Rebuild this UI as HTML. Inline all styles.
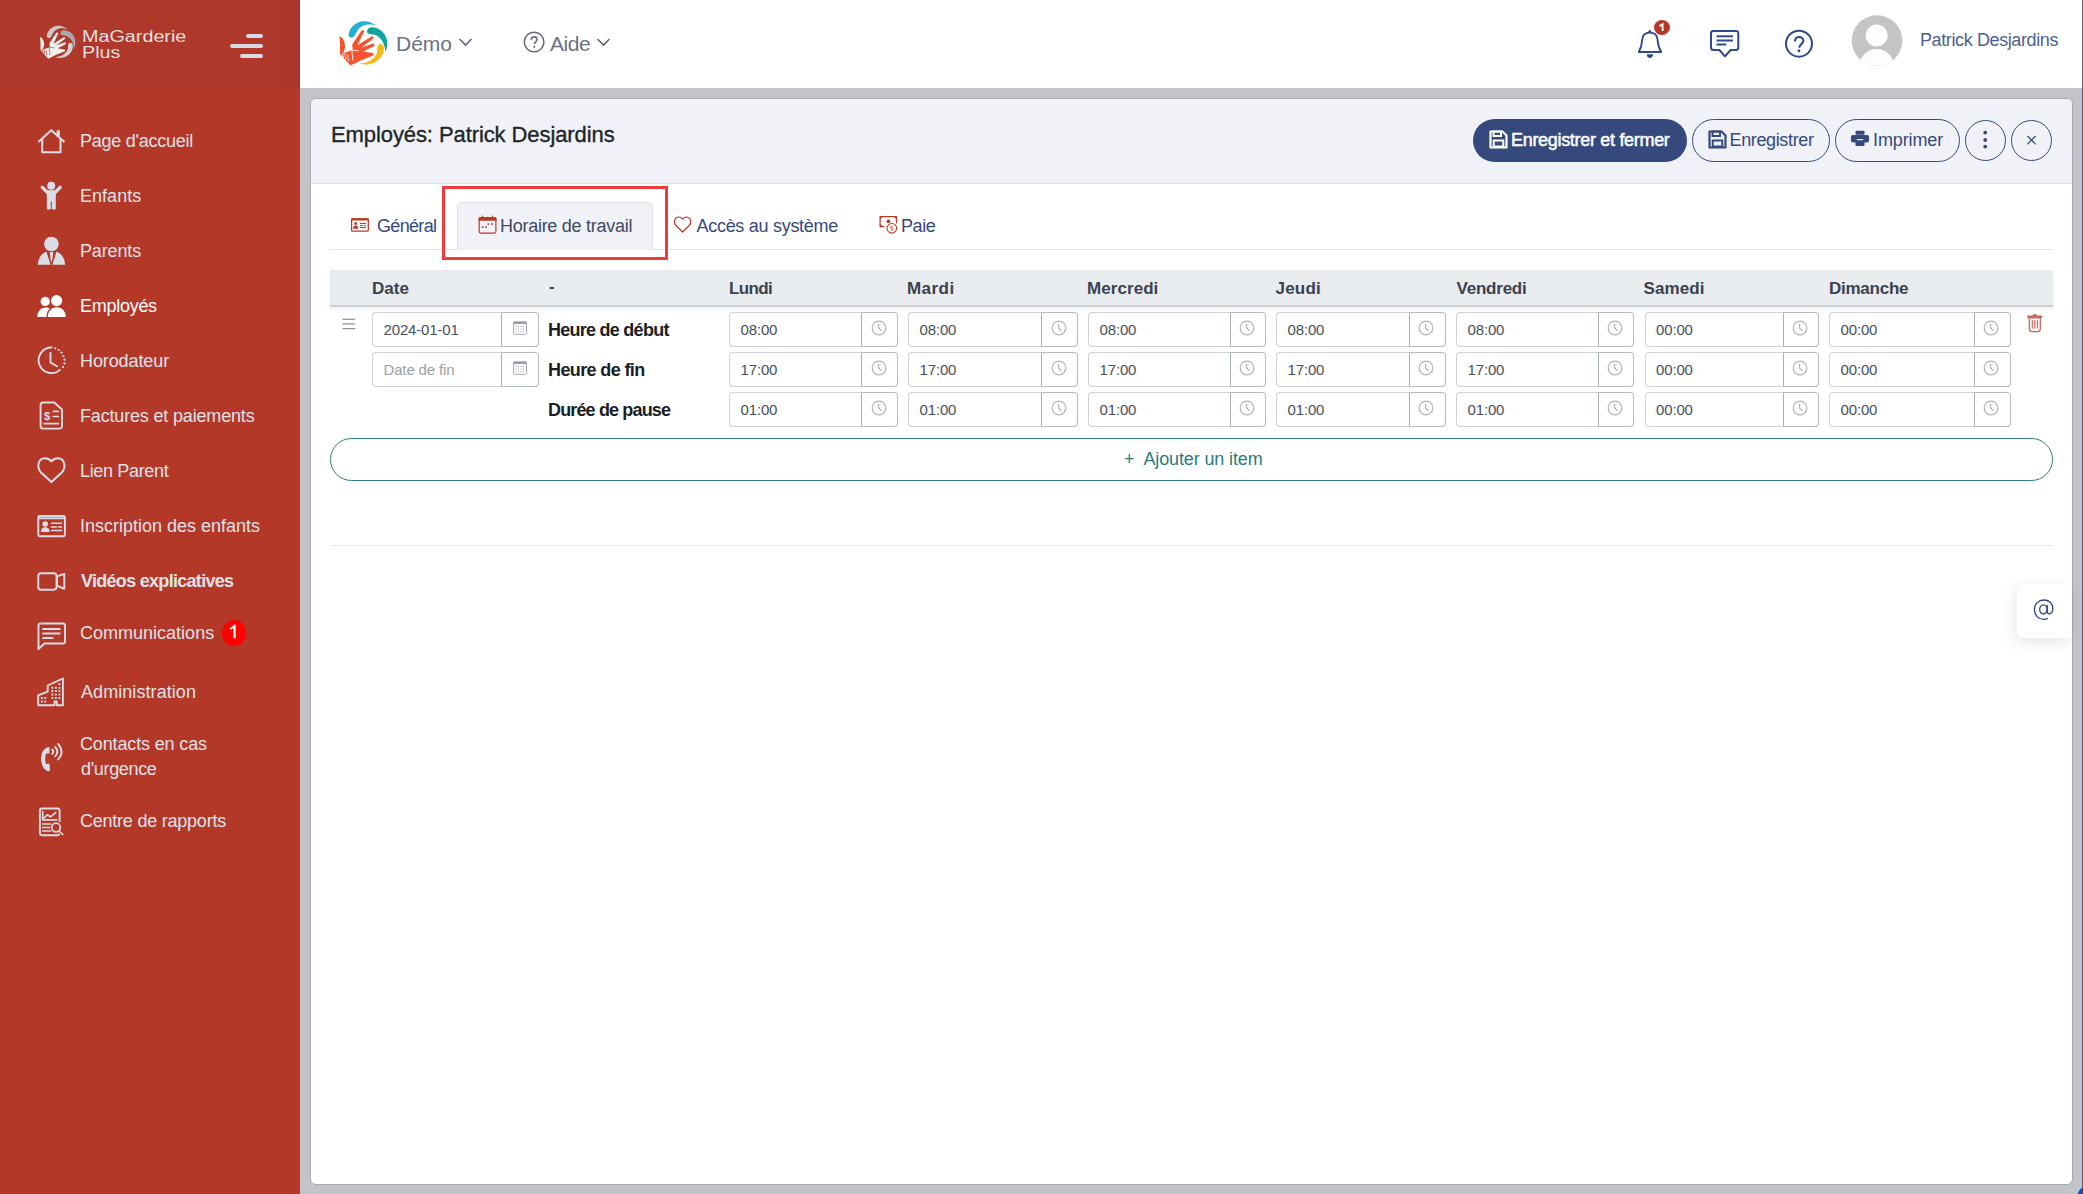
<!DOCTYPE html>
<html><head><meta charset="utf-8"><title>MaGarderie Plus</title>
<style>
html,body{margin:0;padding:0;}
body{width:2083px;height:1194px;overflow:hidden;position:relative;background:#c3c4c8;font-family:"Liberation Sans",sans-serif;}
.t{position:absolute;white-space:nowrap;}
.ic{position:absolute;overflow:visible;}
.box{position:absolute;box-sizing:border-box;}
</style></head><body>
<div class="box" style="left:0;top:0;width:300px;height:1194px;background:#b43828;"></div>
<div class="box" style="left:0;top:0;width:300px;height:88px;background:linear-gradient(to right,#b0382a 0,#b0382a 255px,#a9362a 300px);"></div>
<svg class="ic" style="left:36px;top:22px;" width="44.4" height="40.0" viewBox="0 0 60 54"><path d="M14.6,18.5 C15.5,11 23,5 30,5.2 C35,5.3 39.5,7 42.2,9.8 C38,8.2 32,7.8 27.5,10.5 C24,12.6 22.5,16 21,19 C19.7,21.6 17.5,22 16,21.3 C14.8,20.6 14.4,19.5 14.6,18.5 Z" fill="#c9c9cb"/><path d="M33,15.5 C33,12.5 35.5,11 38.5,11.2 C47,11.8 53.5,19 53.2,28 C53.1,31 52.6,33.5 51.5,36 C51,29 48,22 42,19.2 C40,18.3 37.5,18.5 35.5,18 C34,17.6 33,16.8 33,15.5 Z" fill="#a8a8ab"/><path d="M43.3,33 C43,30 44.5,28.2 46.5,28.1 C48.5,28 50,30 49.9,33 C49.5,41 42,48.5 32,48.6 C29.5,48.6 27.3,48.1 25.5,47.4 C31,47.5 37,45 40.5,41 C42.7,38.5 43.5,35.5 43.3,33 Z" fill="#d2d2d4"/><path d="M5.2,20.5 C8.3,20.8 10.6,24.5 11,29.5 C11.2,32.5 10,35.5 8.8,37.6 L18.6,34 L18.3,28.3 L27.6,14.6 Q29.4,13 30.1,15.6 L23.4,29.3 L37.6,20.6 Q40,19.8 39.5,22.6 L27.1,31.8 L39,27.5 Q41.2,27.6 40.2,29.9 L29.2,35.6 L38.3,37 Q40.6,37.6 39.2,39.4 L27.2,44.3 L16.5,49.5 L6.3,38.2 C5.6,33.5 6.8,26 5.2,20.5 Z" fill="#f1f1f1"/><path d="M8.6,37.6 L9.4,41.6 M11,37.8 L11.9,43 M13.6,38.3 L14.5,44.5 M17.9,34.8 L18.9,44.2 M18.6,34.1 L24.4,34.9" fill="none" stroke="#b43828" stroke-width="0.9" stroke-linecap="round"/></svg>
<div class="t" id="tc28c3672" style="left:81.5px;top:28.76px;font-size:16px;line-height:16px;color:#e6dfdf;font-weight:normal;letter-spacing:0.000px;transform:scaleX(1.235);transform-origin:0 0;">MaGarderie</div>
<div class="t" id="td395f989" style="left:81.5px;top:45.26px;font-size:16px;line-height:16px;color:#e6dfdf;font-weight:normal;letter-spacing:0.000px;transform:scaleX(1.235);transform-origin:0 0;">Plus</div>
<svg class="ic" style="left:226px;top:30px;" width="40" height="32" viewBox="0 0 40 32">
<g stroke="#d6dbe2" stroke-width="4" stroke-linecap="round">
<line x1="22" y1="6" x2="35" y2="6"/><line x1="6" y1="16" x2="35" y2="16"/><line x1="16" y1="26" x2="35" y2="26"/></g></svg>
<svg class="ic" style="left:34px;top:121px;" width="36" height="36" viewBox="0 0 36 36"><g fill="none" stroke="#d9dde5" stroke-width="2" stroke-linejoin="round">
<path d="M4.3,21 L17.3,9.2 L30.5,21"/><path d="M8.2,18 V31.3 H26.5 V18"/></g>
<rect x="22.6" y="9.3" width="3.2" height="6.5" fill="#d9dde5"/></svg>
<div class="t" id="t37de8b58" style="left:80.0px;top:131.76px;font-size:18px;line-height:18px;color:#dfe1e8;font-weight:normal;letter-spacing:-0.253px;">Page d'accueil</div>
<svg class="ic" style="left:34px;top:176px;" width="36" height="36" viewBox="0 0 36 36"><circle cx="17.2" cy="9.7" r="4" fill="#d9dde5"/>
<g stroke="#d9dde5" stroke-width="3.3" stroke-linecap="round"><line x1="8.3" y1="11.3" x2="14" y2="17"/><line x1="26.2" y1="11.3" x2="20.5" y2="17"/></g>
<path d="M12.8,15.5 Q12.8,14.3 14,14.3 H20.5 Q21.8,14.3 21.8,15.5 V32.5 Q21.8,33.5 20.8,33.5 H18.6 Q17.8,33.5 17.8,32.5 V25.5 H16.8 V32.5 Q16.8,33.5 15.9,33.5 H13.8 Q12.8,33.5 12.8,32.5 Z" fill="#d9dde5"/></svg>
<div class="t" id="t1cf4caa8" style="left:80.0px;top:186.76px;font-size:18px;line-height:18px;color:#dfe1e8;font-weight:normal;letter-spacing:0.033px;">Enfants</div>
<svg class="ic" style="left:34px;top:231px;" width="36" height="36" viewBox="0 0 36 36"><circle cx="17.4" cy="13" r="7.3" fill="#d9dde5"/>
<path d="M3.8,33.8 C3.9,27 8,22 12.5,20.8 L16.6,33.8 Z" fill="#d9dde5"/>
<path d="M22.4,20.8 C27,22 31,27 31.1,33.8 L18.4,33.8 Z" fill="#d9dde5"/>
<path d="M15.8,20.9 H19.2 L18.3,29 L17.5,31.5 L16.6,29 Z" fill="#d9dde5"/></svg>
<div class="t" id="t525abe4e" style="left:80.0px;top:241.76px;font-size:18px;line-height:18px;color:#dfe1e8;font-weight:normal;letter-spacing:-0.134px;">Parents</div>
<svg class="ic" style="left:34px;top:286px;" width="36" height="36" viewBox="0 0 36 36"><circle cx="11.2" cy="15.4" r="4.6" fill="#fff"/><circle cx="22.6" cy="14.6" r="5.6" fill="#fff"/>
<path d="M3.3,31 C3.3,25.5 7,21.5 11.5,21.5 C13.3,21.5 15,22 16,22.6 C13.6,24.5 12.6,27.5 12.5,31 Z" fill="#fff"/>
<path d="M13.8,31 C13.8,25.3 17.5,21.3 22.7,21.3 C27.8,21.3 31.8,25.3 31.8,31 Z" fill="#fff"/></svg>
<div class="t" id="tfb248176" style="left:80.0px;top:296.76px;font-size:18px;line-height:18px;color:#ffffff;font-weight:normal;letter-spacing:-0.273px;">Employés</div>
<svg class="ic" style="left:34px;top:341px;" width="36" height="36" viewBox="0 0 36 36"><path d="M18.3,6.5 A12.8,12.8 0 1 0 26.5,28.3" fill="none" stroke="#d9dde5" stroke-width="1.9"/>
<g fill="#d9dde5"><circle cx="21.3" cy="7.3" r="1.1"/><circle cx="24.7" cy="9" r="1.1"/><circle cx="27.5" cy="11.6" r="1.1"/><circle cx="29.4" cy="15" r="1.1"/><circle cx="30.5" cy="18.7" r="1.1"/><circle cx="30.5" cy="22.4" r="1.1"/><circle cx="29" cy="26" r="1.1"/></g>
<path d="M16.5,12 V21.5 L23,25.3" fill="none" stroke="#d9dde5" stroke-width="1.9" stroke-linecap="round"/></svg>
<div class="t" id="td3f3b501" style="left:80.0px;top:351.76px;font-size:18px;line-height:18px;color:#dfe1e8;font-weight:normal;letter-spacing:-0.099px;">Horodateur</div>
<svg class="ic" style="left:34px;top:396px;" width="36" height="36" viewBox="0 0 36 36"><path d="M9,6.5 H20.3 L28,13.5 V30 Q28,32.6 25.4,32.6 H9 Q6.6,32.6 6.6,30 V9 Q6.6,6.5 9,6.5 Z" fill="none" stroke="#d9dde5" stroke-width="1.9" stroke-linejoin="round"/>
<text x="10" y="23.8" font-family="Liberation Sans" font-weight="bold" font-size="11" fill="#d9dde5">$</text>
<g stroke="#d9dde5" stroke-width="1.7" stroke-linecap="round"><line x1="19.3" y1="15.4" x2="24.4" y2="15.4"/><line x1="19.3" y1="20.5" x2="24.4" y2="20.5"/><line x1="10" y1="27.6" x2="24.4" y2="27.6"/></g></svg>
<div class="t" id="t5be32d3b" style="left:80.0px;top:406.76px;font-size:18px;line-height:18px;color:#dfe1e8;font-weight:normal;letter-spacing:-0.170px;">Factures et paiements</div>
<svg class="ic" style="left:34px;top:451px;" width="36" height="36" viewBox="0 0 36 36"><path d="M17.4,31 L7,21.5 C2.5,16.5 3.8,7.3 11,7.3 C14,7.3 16,8.8 17.4,10.3 C18.8,8.8 20.8,7.3 23.8,7.3 C31,7.3 32.3,16.5 27.8,21.5 Z" fill="none" stroke="#d9dde5" stroke-width="2" stroke-linejoin="round"/></svg>
<div class="t" id="t5ed269b5" style="left:80.0px;top:461.76px;font-size:18px;line-height:18px;color:#dfe1e8;font-weight:normal;letter-spacing:-0.340px;">Lien Parent</div>
<svg class="ic" style="left:34px;top:506px;" width="36" height="36" viewBox="0 0 36 36"><rect x="4.3" y="10" width="26.6" height="20.3" rx="1.5" fill="none" stroke="#d9dde5" stroke-width="1.9"/>
<line x1="4.3" y1="12.3" x2="30.9" y2="12.3" stroke="#d9dde5" stroke-width="1.9"/>
<circle cx="11.2" cy="18" r="2.8" fill="#d9dde5"/><path d="M6.9,26 C6.9,22.6 9,21.2 11.2,21.2 C13.4,21.2 15.6,22.6 15.6,26 Z" fill="#d9dde5"/>
<g stroke="#d9dde5" stroke-width="1.6" stroke-linecap="round"><line x1="17.6" y1="17.3" x2="27.5" y2="17.3"/><line x1="17.6" y1="21" x2="22.3" y2="21"/><line x1="24.5" y1="21" x2="27.5" y2="21"/><line x1="17.6" y1="24.5" x2="27.5" y2="24.5"/></g></svg>
<div class="t" id="t97135bcc" style="left:80.0px;top:516.76px;font-size:18px;line-height:18px;color:#dfe1e8;font-weight:normal;letter-spacing:-0.008px;">Inscription des enfants</div>
<svg class="ic" style="left:34px;top:561px;" width="36" height="36" viewBox="0 0 36 36"><rect x="4.3" y="12.2" width="18.2" height="16.5" rx="2.6" fill="none" stroke="#d9dde5" stroke-width="1.9"/>
<path d="M23,15.3 L30.3,12.8 V27.8 L23,24.7 Z" fill="none" stroke="#d9dde5" stroke-width="1.9" stroke-linejoin="round"/></svg>
<div class="t" id="t484a46a2" style="left:81.0px;top:571.76px;font-size:18px;line-height:18px;color:#dfe1e8;font-weight:bold;letter-spacing:-0.705px;">Vidéos explicatives</div>
<svg class="ic" style="left:34px;top:614px;" width="36" height="36" viewBox="0 0 36 36"><path d="M6.3,9.5 H29 Q31,9.5 31,11.5 V27.5 Q31,29.5 29,29.5 H10.5 L4.5,35 V11.5 Q4.5,9.5 6.3,9.5 Z" fill="none" stroke="#d9dde5" stroke-width="1.9" stroke-linejoin="round"/>
<g stroke="#d9dde5" stroke-width="1.8" stroke-linecap="round"><line x1="9" y1="15" x2="25.8" y2="15"/><line x1="9" y1="19.5" x2="25.8" y2="19.5"/><line x1="9" y1="24" x2="18.8" y2="24"/></g></svg>
<div class="t" id="t299c491f" style="left:80.0px;top:623.76px;font-size:18px;line-height:18px;color:#dfe1e8;font-weight:normal;letter-spacing:0.008px;">Communications</div>
<svg class="ic" style="left:34px;top:673px;" width="36" height="36" viewBox="0 0 36 36"><path d="M4.2,32.3 V22.3 L13.7,18.6 V12.5 L28.9,5.5 V32.3 H22.8 V28.5 H20.5 V32.3 Z" fill="none" stroke="#d9dde5" stroke-width="1.9" stroke-linejoin="round"/>
<g fill="#d9dde5"><rect x="24.400000000000002" y="10.1" width="1.9" height="1.9"/><rect x="17.400000000000002" y="13.799999999999999" width="1.9" height="1.9"/><rect x="20.900000000000002" y="13.799999999999999" width="1.9" height="1.9"/><rect x="24.400000000000002" y="13.799999999999999" width="1.9" height="1.9"/><rect x="17.400000000000002" y="17.1" width="1.9" height="1.9"/><rect x="20.900000000000002" y="17.1" width="1.9" height="1.9"/><rect x="24.400000000000002" y="17.1" width="1.9" height="1.9"/><rect x="17.400000000000002" y="20.6" width="1.9" height="1.9"/><rect x="20.900000000000002" y="20.6" width="1.9" height="1.9"/><rect x="24.400000000000002" y="20.6" width="1.9" height="1.9"/><rect x="17.400000000000002" y="24.1" width="1.9" height="1.9"/><rect x="20.900000000000002" y="24.1" width="1.9" height="1.9"/><rect x="24.400000000000002" y="24.1" width="1.9" height="1.9"/><rect x="6.8999999999999995" y="24.1" width="1.9" height="1.9"/><rect x="10.299999999999999" y="24.1" width="1.9" height="1.9"/><rect x="6.8999999999999995" y="27.6" width="1.9" height="1.9"/><rect x="10.299999999999999" y="27.6" width="1.9" height="1.9"/></g></svg>
<div class="t" id="t37e4b3b3" style="left:81.0px;top:682.76px;font-size:18px;line-height:18px;color:#dfe1e8;font-weight:normal;letter-spacing:0.068px;">Administration</div>
<svg class="ic" style="left:34px;top:738px;" width="36" height="36" viewBox="0 0 36 36"><path d="M15.5,9 C12,9 8.5,12.5 7.5,17 C6.5,22 7.5,27 10,30.5 C11.5,32.5 14,33.5 16,33 L15.5,25.5 L12,26 C11,23 11,19 12,15.5 L15.5,15.5 Z" fill="#d9dde5"/>
<g fill="none" stroke="#d9dde5" stroke-width="1.9" stroke-linecap="round"><path d="M18.3,11.5 Q20.3,13.5 18.3,16"/><path d="M21.2,9 Q25.5,13.7 21.2,18.3"/><path d="M24.2,6 Q31,13.7 24.2,21.5"/></g></svg>
<div class="t" id="t5dea8d7a" style="left:80.0px;top:734.76px;font-size:18px;line-height:18px;color:#dfe1e8;font-weight:normal;letter-spacing:-0.144px;">Contacts en cas</div>
<svg class="ic" style="left:34px;top:803px;" width="36" height="36" viewBox="0 0 36 36"><path d="M8,5.5 H23.5 Q25.6,5.5 25.6,7.6 V19" fill="none" stroke="#d9dde5" stroke-width="1.9"/>
<path d="M25.6,30.5 Q25.2,32.2 23.5,32.2 H8 Q5.9,32.2 5.9,30 V7.6 Q5.9,5.5 8,5.5" fill="none" stroke="#d9dde5" stroke-width="1.9"/>
<g fill="none" stroke="#d9dde5" stroke-width="1.7" stroke-linecap="round" stroke-linejoin="round"><path d="M8.7,8.7 V16.8 H22.5"/><path d="M10,15 L13.2,11.8 L16.5,13.8 L21.7,9.6"/>
<line x1="8.7" y1="21" x2="16.5" y2="21"/><line x1="8.7" y1="24.5" x2="15.5" y2="24.5"/><line x1="8.7" y1="28" x2="16.5" y2="28"/>
<circle cx="22" cy="24.5" r="4.3"/><line x1="25.2" y1="28" x2="28.8" y2="31.5"/></g></svg>
<div class="t" id="t1e6ba577" style="left:80.0px;top:811.76px;font-size:18px;line-height:18px;color:#dfe1e8;font-weight:normal;letter-spacing:-0.230px;">Centre de rapports</div>
<div class="t" id="tf7f37f4f" style="left:81.0px;top:759.76px;font-size:18px;line-height:18px;color:#dfe1e8;font-weight:normal;letter-spacing:-0.327px;">d'urgence</div>
<div class="box" style="left:222px;top:620px;width:24px;height:26px;border-radius:50%;background:#ff0000;"></div>
<svg class="ic" style="left:222px;top:620px;" width="24" height="26" viewBox="0 0 24 26"><path d="M8.3,9 L12.6,6 V18.2" fill="none" stroke="#fff" stroke-width="2.1" stroke-linejoin="miter"/></svg>
<div class="box" style="left:300px;top:0;width:1782px;height:88px;background:#fff;"></div>
<div class="box" style="left:2082px;top:0;width:1px;height:1194px;background:#5d5a84;"></div>
<div class="box" style="left:2077px;top:1185px;width:26px;height:26px;border-radius:50%;background:#1f4aa6;"></div>
<svg class="ic" style="left:334px;top:16px;" width="60.0" height="54.0" viewBox="0 0 60 54"><path d="M14.6,18.5 C15.5,11 23,5 30,5.2 C35,5.3 39.5,7 42.2,9.8 C38,8.2 32,7.8 27.5,10.5 C24,12.6 22.5,16 21,19 C19.7,21.6 17.5,22 16,21.3 C14.8,20.6 14.4,19.5 14.6,18.5 Z" fill="#22b0d8"/><path d="M33,15.5 C33,12.5 35.5,11 38.5,11.2 C47,11.8 53.5,19 53.2,28 C53.1,31 52.6,33.5 51.5,36 C51,29 48,22 42,19.2 C40,18.3 37.5,18.5 35.5,18 C34,17.6 33,16.8 33,15.5 Z" fill="#11a59d"/><path d="M43.3,33 C43,30 44.5,28.2 46.5,28.1 C48.5,28 50,30 49.9,33 C49.5,41 42,48.5 32,48.6 C29.5,48.6 27.3,48.1 25.5,47.4 C31,47.5 37,45 40.5,41 C42.7,38.5 43.5,35.5 43.3,33 Z" fill="#f5bb14"/><path d="M5.2,20.5 C8.3,20.8 10.6,24.5 11,29.5 C11.2,32.5 10,35.5 8.8,37.6 L18.6,34 L18.3,28.3 L27.6,14.6 Q29.4,13 30.1,15.6 L23.4,29.3 L37.6,20.6 Q40,19.8 39.5,22.6 L27.1,31.8 L39,27.5 Q41.2,27.6 40.2,29.9 L29.2,35.6 L38.3,37 Q40.6,37.6 39.2,39.4 L27.2,44.3 L16.5,49.5 L6.3,38.2 C5.6,33.5 6.8,26 5.2,20.5 Z" fill="#f7532f"/><path d="M8.6,37.6 L9.4,41.6 M11,37.8 L11.9,43 M13.6,38.3 L14.5,44.5 M17.9,34.8 L18.9,44.2 M18.6,34.1 L24.4,34.9" fill="none" stroke="#ffffff" stroke-width="0.9" stroke-linecap="round"/></svg>
<div class="t" id="tea6dfe55" style="left:396.0px;top:33.22px;font-size:21px;line-height:21px;color:#6c7183;font-weight:normal;letter-spacing:-0.034px;">Démo</div>
<svg class="ic" style="left:458px;top:36px;" width="16" height="12" viewBox="0 0 16 12"><path d="M1.5,3 L7.5,9 L13.5,3" fill="none" stroke="#5d6376" stroke-width="1.6"/></svg>
<svg class="ic" style="left:522px;top:30px;" width="24" height="24" viewBox="0 0 24 24"><circle cx="12.1" cy="12" r="9.8" fill="none" stroke="#666b7d" stroke-width="1.5"/><path d="M9.3,10 C9.3,7.9 10.6,6.9 12.2,6.9 C13.9,6.9 15,8 15,9.5 C15,11.8 12.4,12 12.4,14.3" fill="none" stroke="#666b7d" stroke-width="1.6"/><circle cx="12.3" cy="16.8" r="1.1" fill="#666b7d"/></svg>
<div class="t" id="t45380d61" style="left:550.0px;top:33.22px;font-size:21px;line-height:21px;color:#6c7183;font-weight:normal;letter-spacing:-0.466px;">Aide</div>
<svg class="ic" style="left:596px;top:36px;" width="16" height="12" viewBox="0 0 16 12"><path d="M1.5,3 L7.5,9 L13.5,3" fill="none" stroke="#5d6376" stroke-width="1.6"/></svg>
<svg class="ic" style="left:1632px;top:16px;" width="44" height="46" viewBox="0 0 44 46"><path d="M6.8,36 H29.2 C27.3,33 26,29 25.6,24 C25.4,19.5 22.5,16.6 17.9,16.6 C13.3,16.6 10.4,19.5 10.2,24 C9.8,29 8.5,33 6.8,36 Z" fill="none" stroke="#2f4a8a" stroke-width="1.9" stroke-linejoin="round"/>
<circle cx="17.9" cy="15.6" r="1.5" fill="#2f4a8a"/><path d="M14.7,38.3 H21.1 Q20.8,41.9 17.9,41.9 Q15,41.9 14.7,38.3 Z" fill="#2f4a8a"/></svg>
<div class="box" style="left:1654px;top:20px;width:16px;height:15px;border-radius:50%;background:#b8372a;"></div>
<svg class="ic" style="left:1654px;top:20px;" width="16" height="15" viewBox="0 0 16 15"><path d="M5.4,6.1 L8.6,4.3 V10.9" fill="none" stroke="#fff" stroke-width="1.8"/></svg>
<svg class="ic" style="left:1708px;top:28px;" width="34" height="32" viewBox="0 0 34 32"><path d="M5.3,2.9 H28 Q30.3,2.9 30.3,5.2 V19.6 Q30.3,22 28,22 H22.6 L17,28.3 L11.4,22 H5.3 Q3,22 3,19.6 V5.2 Q3,2.9 5.3,2.9Z" fill="none" stroke="#2f4a8a" stroke-width="2" stroke-linejoin="round"/>
<g stroke="#2f4a8a" stroke-width="2"><line x1="8.5" y1="8.3" x2="25" y2="8.3"/><line x1="8.5" y1="12.5" x2="25" y2="12.5"/><line x1="8.5" y1="16.5" x2="18.3" y2="16.5"/></g></svg>
<svg class="ic" style="left:1784px;top:29px;" width="30" height="30" viewBox="0 0 30 30"><circle cx="15" cy="14.7" r="13" fill="none" stroke="#2f4a8a" stroke-width="2"/>
<path d="M11,12.6 C11,9.6 12.8,8 15.1,8 C17.6,8 19.3,9.7 19.3,11.8 C19.3,15 15.2,15.3 15.2,18.7" fill="none" stroke="#2f4a8a" stroke-width="2.1"/><circle cx="14.9" cy="21.8" r="1.5" fill="#2f4a8a"/></svg>
<svg class="ic" style="left:1851px;top:15px;" width="52" height="52" viewBox="0 0 52 52"><defs><clipPath id="av"><circle cx="26" cy="25.5" r="25.3"/></clipPath></defs>
<circle cx="26" cy="25.5" r="25.3" fill="#c4c4c4"/>
<g clip-path="url(#av)" fill="#fdfdfd"><circle cx="25.7" cy="20.5" r="11"/><ellipse cx="25.7" cy="52" rx="17.5" ry="18"/></g></svg>
<div class="t" id="tb3319f88" style="left:1920.0px;top:30.56px;font-size:18px;line-height:18px;color:#4e5f93;font-weight:normal;letter-spacing:-0.389px;">Patrick Desjardins</div>
<div class="box" style="left:310px;top:98px;width:1763px;height:1087px;background:#fff;border:1px solid #a9aaaf;border-radius:6px;overflow:hidden;"><div style="position:absolute;left:0;top:0;width:1761px;height:84px;background:#f0f2f7;border-bottom:1px solid #dde1e6;"></div></div>
<div class="t" id="t535848aa" style="left:331.0px;top:124.38px;font-size:22px;line-height:22px;color:#212529;font-weight:normal;letter-spacing:-0.090px;-webkit-text-stroke:0.35px #212529;">Employés: Patrick Desjardins</div>
<div class="box" style="left:1473px;top:119px;width:214px;height:43px;border-radius:22px;background:#36497d;"></div>
<svg class="ic" style="left:1489px;top:130px;" width="19" height="19" viewBox="0 0 19 19"><path d="M1.5,1.5 H13.5 L17.5,5.5 V17.5 H1.5 Z" fill="none" stroke="#fff" stroke-width="2.2" stroke-linejoin="round"/>
<rect x="4.5" y="1.5" width="7.5" height="4.5" fill="none" stroke="#fff" stroke-width="2"/><rect x="4.7" y="10.5" width="9.6" height="6" fill="none" stroke="#fff" stroke-width="2"/></svg>
<div class="t" id="tab7a3b78" style="left:1511.0px;top:130.76px;font-size:18px;line-height:18px;color:#fff;font-weight:normal;letter-spacing:-0.310px;-webkit-text-stroke:0.5px #fff;">Enregistrer et fermer</div>
<div class="box" style="left:1692px;top:119px;width:138px;height:43px;border-radius:22px;border:1.5px solid #36497d;"></div>
<svg class="ic" style="left:1708px;top:130px;" width="19" height="19" viewBox="0 0 19 19"><path d="M1.5,1.5 H13.5 L17.5,5.5 V17.5 H1.5 Z" fill="none" stroke="#36497d" stroke-width="2.2" stroke-linejoin="round"/>
<rect x="4.5" y="1.5" width="7.5" height="4.5" fill="none" stroke="#36497d" stroke-width="2"/><rect x="4.7" y="10.5" width="9.6" height="6" fill="none" stroke="#36497d" stroke-width="2"/></svg>
<div class="t" id="td6e0880f" style="left:1729.5px;top:130.76px;font-size:18px;line-height:18px;color:#36497d;font-weight:normal;letter-spacing:-0.360px;">Enregistrer</div>
<div class="box" style="left:1835px;top:119px;width:125px;height:43px;border-radius:22px;border:1.5px solid #36497d;"></div>
<svg class="ic" style="left:1850px;top:130px;" width="20" height="17" viewBox="0 0 20 17"><rect x="5.5" y="0.8" width="9" height="4" rx="1" fill="#36497d"/><rect x="1" y="5" width="18" height="7.5" rx="2" fill="#36497d"/><rect x="5.5" y="9.5" width="9" height="6.5" rx="1" fill="#36497d"/><rect x="6.8" y="9" width="6.4" height="1.2" fill="#f0f2f7"/></svg>
<div class="t" id="t110228c9" style="left:1873.0px;top:130.76px;font-size:18px;line-height:18px;color:#36497d;font-weight:normal;letter-spacing:-0.107px;">Imprimer</div>
<div class="box" style="left:1965px;top:120px;width:41px;height:41px;border-radius:50%;border:1.5px solid #36497d;"></div>
<svg class="ic" style="left:1981px;top:128px;" width="8" height="24" viewBox="0 0 8 24"><circle cx="4.2" cy="4.6" r="1.9" fill="#36497d"/><circle cx="4.2" cy="12" r="1.9" fill="#36497d"/><circle cx="4.2" cy="18.6" r="1.9" fill="#36497d"/></svg>
<div class="box" style="left:2011px;top:120px;width:41px;height:41px;border-radius:50%;border:1.5px solid #36497d;"></div>
<svg class="ic" style="left:2025px;top:134px;" width="14" height="14" viewBox="0 0 14 14"><g stroke="#36497d" stroke-width="1.3"><line x1="2.3" y1="2" x2="10.7" y2="10.4"/><line x1="10.7" y1="2" x2="2.3" y2="10.4"/></g></svg>
<div class="box" style="left:330px;top:249px;width:1723px;height:1px;background:#dee2e6;"></div>
<div class="box" style="left:457px;top:202px;width:196px;height:48px;background:#f0f2f7;border:1px solid #dee2e6;border-bottom:none;border-radius:5px 5px 0 0;"></div>
<svg class="ic" style="left:345px;top:210px;" width="30" height="30" viewBox="0 0 30 30"><rect x="6.6" y="8.8" width="16.7" height="12.4" rx="1.2" fill="none" stroke="#b83b25" stroke-width="1.3"/>
<rect x="6.2" y="8.3" width="17.5" height="2.2" fill="#b83b25"/>
<circle cx="10.7" cy="13.4" r="1.5" fill="#b83b25"/><path d="M8.1,18.8 C8.1,16.3 9.4,15.5 10.7,15.5 C12,15.5 13.3,16.3 13.3,18.8 Z" fill="#b83b25"/>
<g stroke="#b83b25" stroke-width="1.1"><line x1="15" y1="13.4" x2="21" y2="13.4"/><line x1="15" y1="15.5" x2="17.8" y2="15.5"/><line x1="19.1" y1="15.5" x2="21" y2="15.5"/><line x1="15" y1="17.5" x2="21" y2="17.5"/></g></svg>
<div class="t" id="t6f29dc0c" style="left:377.0px;top:216.56px;font-size:18px;line-height:18px;color:#36497d;font-weight:normal;letter-spacing:-0.667px;">Général</div>
<svg class="ic" style="left:472px;top:210px;" width="30" height="30" viewBox="0 0 30 30"><rect x="7.2" y="7.5" width="16.7" height="15.6" rx="1.5" fill="none" stroke="#b83b25" stroke-width="1.2"/>
<path d="M6.6,10.8 V8.8 Q6.6,6.9 8.6,6.9 H22.5 Q24.5,6.9 24.5,8.8 V10.8 Z" fill="#b83b25"/><rect x="9.9" y="5.6" width="1.1" height="2" fill="#b83b25"/><rect x="20" y="5.6" width="1.1" height="2" fill="#b83b25"/>
<g fill="#b83b25"><rect x="15.6" y="13.2" width="1.6" height="1.6"/><rect x="19.2" y="13.2" width="1.6" height="1.6"/><rect x="10" y="16.4" width="1.6" height="1.6"/><rect x="13.3" y="16.4" width="1.6" height="1.6"/></g></svg>
<div class="t" id="t8ef695cb" style="left:500.0px;top:216.56px;font-size:18px;line-height:18px;color:#3f4a62;font-weight:normal;letter-spacing:-0.274px;">Horaire de travail</div>
<svg class="ic" style="left:673px;top:215px;" width="20" height="19" viewBox="0 0 20 19"><path d="M9.6,17 L3,10.5 C0.5,8 1,2.5 5.3,2 C7.3,1.8 8.6,3 9.6,4.2 C10.6,3 11.9,1.8 13.9,2 C18.2,2.5 18.7,8 16.2,10.5 Z" fill="none" stroke="#b83b25" stroke-width="1.2" stroke-linejoin="round"/></svg>
<div class="t" id="tebeabed6" style="left:696.5px;top:216.56px;font-size:18px;line-height:18px;color:#36497d;font-weight:normal;letter-spacing:-0.286px;">Accès au système</div>
<svg class="ic" style="left:874px;top:210px;" width="30" height="30" viewBox="0 0 30 30"><path d="M10.5,16.6 H6.1 V6.6 H22.5 V13.3" fill="none" stroke="#b83b25" stroke-width="1.2"/>
<path d="M6.1,6.6 H9.3 L6.1,9.3 Z M22.5,6.6 H19.5 L22.5,9.3 Z M6.1,16.6 V14 L9,16.6 Z" fill="#b83b25"/>
<circle cx="14.4" cy="11.3" r="1.9" fill="#b83b25"/><circle cx="17.8" cy="18.3" r="4.8" fill="#fff" stroke="#b83b25" stroke-width="1.1"/>
<path d="M19,16.6 C18.4,16 16.5,16 16.5,17.2 C16.5,18.4 19.1,18 19.1,19.3 C19.1,20.5 17,20.5 16.4,19.8" fill="none" stroke="#b83b25" stroke-width="0.9"/></svg>
<div class="t" id="tefde699e" style="left:901.0px;top:216.56px;font-size:18px;line-height:18px;color:#36497d;font-weight:normal;letter-spacing:-0.400px;">Paie</div>
<div class="box" style="left:442px;top:186px;width:226px;height:74px;border:3px solid #ef3b3b;"></div>
<div class="box" style="left:330px;top:270px;width:1723px;height:37px;background:#e9ecef;border-bottom:2px solid #ccd0d5;box-shadow:0 3px 5px rgba(0,0,0,0.06);"></div>
<div class="t" id="tfb03861f" style="left:372.0px;top:279.61px;font-size:17px;line-height:17px;color:#3b424e;font-weight:bold;letter-spacing:0.016px;">Date</div>
<div class="t" id="taf66fa54" style="left:729.0px;top:279.61px;font-size:17px;line-height:17px;color:#3b424e;font-weight:bold;letter-spacing:-0.650px;">Lundi</div>
<div class="t" id="t83307d54" style="left:907.0px;top:279.61px;font-size:17px;line-height:17px;color:#3b424e;font-weight:bold;letter-spacing:0.450px;">Mardi</div>
<div class="t" id="t4b507e02" style="left:1087.0px;top:279.61px;font-size:17px;line-height:17px;color:#3b424e;font-weight:bold;letter-spacing:0.065px;">Mercredi</div>
<div class="t" id="t09648975" style="left:1275.5px;top:279.61px;font-size:17px;line-height:17px;color:#3b424e;font-weight:bold;letter-spacing:0.200px;">Jeudi</div>
<div class="t" id="t438d3547" style="left:1456.5px;top:279.61px;font-size:17px;line-height:17px;color:#3b424e;font-weight:bold;letter-spacing:-0.221px;">Vendredi</div>
<div class="t" id="tba5662f4" style="left:1643.5px;top:279.61px;font-size:17px;line-height:17px;color:#3b424e;font-weight:bold;letter-spacing:0.110px;">Samedi</div>
<div class="t" id="td27e865c" style="left:1829.0px;top:279.61px;font-size:17px;line-height:17px;color:#3b424e;font-weight:bold;letter-spacing:-0.249px;">Dimanche</div>
<div class="t" id="t3a6ba656" style="left:549px;top:277.61px;font-size:17px;line-height:17px;color:#3b424e;font-weight:bold;letter-spacing:0.000px;">-</div>
<svg class="ic" style="left:341px;top:317px;" width="16" height="14" viewBox="0 0 16 14"><g stroke="#8d929b" stroke-width="1.3"><line x1="1.5" y1="2.3" x2="14.2" y2="2.3"/><line x1="1.5" y1="6.9" x2="14.2" y2="6.9"/><line x1="1.5" y1="11.6" x2="14.2" y2="11.6"/></g></svg>
<div class="box" style="left:372px;top:312px;width:130px;height:35px;border:1px solid #ced3d9;border-right:none;border-radius:4px 0 0 4px;background:#fff;"></div>
<div class="box" style="left:501px;top:312px;width:38px;height:35px;border:1px solid #b5bbc2;border-left:1.5px solid #a9afb7;border-radius:0 4px 4px 0;background:#fff;"></div>
<div class="t" id="te4bf3af3" style="left:383.5px;top:322.30px;font-size:15px;line-height:15px;color:#495057;font-weight:normal;letter-spacing:-0.150px;">2024-01-01</div>
<svg class="ic" style="left:512.0px;top:319.5px;" width="16" height="16" viewBox="0 0 16 16"><rect x="1.5" y="1.8" width="13" height="12.5" rx="0.8" fill="none" stroke="#98a0ab" stroke-width="0.9"/><rect x="1.5" y="1.8" width="13" height="2.2" fill="#98a0ab"/>
<g fill="#98a0ab"><rect x="3.4" y="6.0" width="1" height="1"/><rect x="3.4" y="8.6" width="1" height="1"/><rect x="3.4" y="11.2" width="1" height="1"/><rect x="5.9" y="6.0" width="1" height="1"/><rect x="5.9" y="8.6" width="1" height="1"/><rect x="5.9" y="11.2" width="1" height="1"/><rect x="8.4" y="6.0" width="1" height="1"/><rect x="8.4" y="8.6" width="1" height="1"/><rect x="8.4" y="11.2" width="1" height="1"/><rect x="10.9" y="6.0" width="1" height="1"/><rect x="10.9" y="8.6" width="1" height="1"/><rect x="10.9" y="11.2" width="1" height="1"/></g></svg>
<div class="box" style="left:372px;top:352px;width:130px;height:35px;border:1px solid #ced3d9;border-right:none;border-radius:4px 0 0 4px;background:#fff;"></div>
<div class="box" style="left:501px;top:352px;width:38px;height:35px;border:1px solid #b5bbc2;border-left:1.5px solid #a9afb7;border-radius:0 4px 4px 0;background:#fff;"></div>
<div class="t" id="t70374e59" style="left:383.5px;top:362.30px;font-size:15px;line-height:15px;color:#9aa0a6;font-weight:normal;letter-spacing:-0.150px;"><span style="color:#9aa0a6">Date de fin</span></div>
<svg class="ic" style="left:512.0px;top:359.5px;" width="16" height="16" viewBox="0 0 16 16"><rect x="1.5" y="1.8" width="13" height="12.5" rx="0.8" fill="none" stroke="#98a0ab" stroke-width="0.9"/><rect x="1.5" y="1.8" width="13" height="2.2" fill="#98a0ab"/>
<g fill="#98a0ab"><rect x="3.4" y="6.0" width="1" height="1"/><rect x="3.4" y="8.6" width="1" height="1"/><rect x="3.4" y="11.2" width="1" height="1"/><rect x="5.9" y="6.0" width="1" height="1"/><rect x="5.9" y="8.6" width="1" height="1"/><rect x="5.9" y="11.2" width="1" height="1"/><rect x="8.4" y="6.0" width="1" height="1"/><rect x="8.4" y="8.6" width="1" height="1"/><rect x="8.4" y="11.2" width="1" height="1"/><rect x="10.9" y="6.0" width="1" height="1"/><rect x="10.9" y="8.6" width="1" height="1"/><rect x="10.9" y="11.2" width="1" height="1"/></g></svg>
<div class="t" id="ted536452" style="left:548.0px;top:320.76px;font-size:18px;line-height:18px;color:#1b1e24;font-weight:bold;letter-spacing:-0.740px;">Heure de début</div>
<div class="t" id="t9005e830" style="left:548.0px;top:360.76px;font-size:18px;line-height:18px;color:#1b1e24;font-weight:bold;letter-spacing:-0.618px;">Heure de fin</div>
<div class="t" id="t648bf754" style="left:548.0px;top:400.76px;font-size:18px;line-height:18px;color:#1b1e24;font-weight:bold;letter-spacing:-0.853px;">Durée de pause</div>
<div class="box" style="left:729px;top:312px;width:133px;height:35px;border:1px solid #ced3d9;border-right:none;border-radius:4px 0 0 4px;background:#fff;"></div>
<div class="box" style="left:861px;top:312px;width:37px;height:35px;border:1px solid #b5bbc2;border-left:1.5px solid #a9afb7;border-radius:0 4px 4px 0;background:#fff;"></div>
<div class="t" id="tfde6f164" style="left:740.5px;top:322.30px;font-size:15px;line-height:15px;color:#495057;font-weight:normal;letter-spacing:-0.150px;">08:00</div>
<svg class="ic" style="left:870.5px;top:320.0px;" width="16" height="16" viewBox="0 0 16 16"><circle cx="8" cy="8" r="6.8" fill="none" stroke="#adb4be" stroke-width="1.2"/><path d="M7.6,3.8 V8.3 L10.6,10.8" fill="none" stroke="#adb4be" stroke-width="1.2"/></svg>
<div class="box" style="left:729px;top:352px;width:133px;height:35px;border:1px solid #ced3d9;border-right:none;border-radius:4px 0 0 4px;background:#fff;"></div>
<div class="box" style="left:861px;top:352px;width:37px;height:35px;border:1px solid #b5bbc2;border-left:1.5px solid #a9afb7;border-radius:0 4px 4px 0;background:#fff;"></div>
<div class="t" id="t1852a224" style="left:740.5px;top:362.30px;font-size:15px;line-height:15px;color:#495057;font-weight:normal;letter-spacing:-0.150px;">17:00</div>
<svg class="ic" style="left:870.5px;top:360.0px;" width="16" height="16" viewBox="0 0 16 16"><circle cx="8" cy="8" r="6.8" fill="none" stroke="#adb4be" stroke-width="1.2"/><path d="M7.6,3.8 V8.3 L10.6,10.8" fill="none" stroke="#adb4be" stroke-width="1.2"/></svg>
<div class="box" style="left:729px;top:392px;width:133px;height:35px;border:1px solid #ced3d9;border-right:none;border-radius:4px 0 0 4px;background:#fff;"></div>
<div class="box" style="left:861px;top:392px;width:37px;height:35px;border:1px solid #b5bbc2;border-left:1.5px solid #a9afb7;border-radius:0 4px 4px 0;background:#fff;"></div>
<div class="t" id="t5474eacd" style="left:740.5px;top:402.30px;font-size:15px;line-height:15px;color:#495057;font-weight:normal;letter-spacing:-0.150px;">01:00</div>
<svg class="ic" style="left:870.5px;top:400.0px;" width="16" height="16" viewBox="0 0 16 16"><circle cx="8" cy="8" r="6.8" fill="none" stroke="#adb4be" stroke-width="1.2"/><path d="M7.6,3.8 V8.3 L10.6,10.8" fill="none" stroke="#adb4be" stroke-width="1.2"/></svg>
<div class="box" style="left:908px;top:312px;width:134px;height:35px;border:1px solid #ced3d9;border-right:none;border-radius:4px 0 0 4px;background:#fff;"></div>
<div class="box" style="left:1041px;top:312px;width:37px;height:35px;border:1px solid #b5bbc2;border-left:1.5px solid #a9afb7;border-radius:0 4px 4px 0;background:#fff;"></div>
<div class="t" id="tcfc8efd0" style="left:919.5px;top:322.30px;font-size:15px;line-height:15px;color:#495057;font-weight:normal;letter-spacing:-0.150px;">08:00</div>
<svg class="ic" style="left:1050.5px;top:320.0px;" width="16" height="16" viewBox="0 0 16 16"><circle cx="8" cy="8" r="6.8" fill="none" stroke="#adb4be" stroke-width="1.2"/><path d="M7.6,3.8 V8.3 L10.6,10.8" fill="none" stroke="#adb4be" stroke-width="1.2"/></svg>
<div class="box" style="left:908px;top:352px;width:134px;height:35px;border:1px solid #ced3d9;border-right:none;border-radius:4px 0 0 4px;background:#fff;"></div>
<div class="box" style="left:1041px;top:352px;width:37px;height:35px;border:1px solid #b5bbc2;border-left:1.5px solid #a9afb7;border-radius:0 4px 4px 0;background:#fff;"></div>
<div class="t" id="tacb1b635" style="left:919.5px;top:362.30px;font-size:15px;line-height:15px;color:#495057;font-weight:normal;letter-spacing:-0.150px;">17:00</div>
<svg class="ic" style="left:1050.5px;top:360.0px;" width="16" height="16" viewBox="0 0 16 16"><circle cx="8" cy="8" r="6.8" fill="none" stroke="#adb4be" stroke-width="1.2"/><path d="M7.6,3.8 V8.3 L10.6,10.8" fill="none" stroke="#adb4be" stroke-width="1.2"/></svg>
<div class="box" style="left:908px;top:392px;width:134px;height:35px;border:1px solid #ced3d9;border-right:none;border-radius:4px 0 0 4px;background:#fff;"></div>
<div class="box" style="left:1041px;top:392px;width:37px;height:35px;border:1px solid #b5bbc2;border-left:1.5px solid #a9afb7;border-radius:0 4px 4px 0;background:#fff;"></div>
<div class="t" id="ted6f6dd5" style="left:919.5px;top:402.30px;font-size:15px;line-height:15px;color:#495057;font-weight:normal;letter-spacing:-0.150px;">01:00</div>
<svg class="ic" style="left:1050.5px;top:400.0px;" width="16" height="16" viewBox="0 0 16 16"><circle cx="8" cy="8" r="6.8" fill="none" stroke="#adb4be" stroke-width="1.2"/><path d="M7.6,3.8 V8.3 L10.6,10.8" fill="none" stroke="#adb4be" stroke-width="1.2"/></svg>
<div class="box" style="left:1088px;top:312px;width:142.5px;height:35px;border:1px solid #ced3d9;border-right:none;border-radius:4px 0 0 4px;background:#fff;"></div>
<div class="box" style="left:1229.5px;top:312px;width:36.5px;height:35px;border:1px solid #b5bbc2;border-left:1.5px solid #a9afb7;border-radius:0 4px 4px 0;background:#fff;"></div>
<div class="t" id="teba21383" style="left:1099.5px;top:322.30px;font-size:15px;line-height:15px;color:#495057;font-weight:normal;letter-spacing:-0.150px;">08:00</div>
<svg class="ic" style="left:1238.75px;top:320.0px;" width="16" height="16" viewBox="0 0 16 16"><circle cx="8" cy="8" r="6.8" fill="none" stroke="#adb4be" stroke-width="1.2"/><path d="M7.6,3.8 V8.3 L10.6,10.8" fill="none" stroke="#adb4be" stroke-width="1.2"/></svg>
<div class="box" style="left:1088px;top:352px;width:142.5px;height:35px;border:1px solid #ced3d9;border-right:none;border-radius:4px 0 0 4px;background:#fff;"></div>
<div class="box" style="left:1229.5px;top:352px;width:36.5px;height:35px;border:1px solid #b5bbc2;border-left:1.5px solid #a9afb7;border-radius:0 4px 4px 0;background:#fff;"></div>
<div class="t" id="t7b7c4c5b" style="left:1099.5px;top:362.30px;font-size:15px;line-height:15px;color:#495057;font-weight:normal;letter-spacing:-0.150px;">17:00</div>
<svg class="ic" style="left:1238.75px;top:360.0px;" width="16" height="16" viewBox="0 0 16 16"><circle cx="8" cy="8" r="6.8" fill="none" stroke="#adb4be" stroke-width="1.2"/><path d="M7.6,3.8 V8.3 L10.6,10.8" fill="none" stroke="#adb4be" stroke-width="1.2"/></svg>
<div class="box" style="left:1088px;top:392px;width:142.5px;height:35px;border:1px solid #ced3d9;border-right:none;border-radius:4px 0 0 4px;background:#fff;"></div>
<div class="box" style="left:1229.5px;top:392px;width:36.5px;height:35px;border:1px solid #b5bbc2;border-left:1.5px solid #a9afb7;border-radius:0 4px 4px 0;background:#fff;"></div>
<div class="t" id="t36d2f7ca" style="left:1099.5px;top:402.30px;font-size:15px;line-height:15px;color:#495057;font-weight:normal;letter-spacing:-0.150px;">01:00</div>
<svg class="ic" style="left:1238.75px;top:400.0px;" width="16" height="16" viewBox="0 0 16 16"><circle cx="8" cy="8" r="6.8" fill="none" stroke="#adb4be" stroke-width="1.2"/><path d="M7.6,3.8 V8.3 L10.6,10.8" fill="none" stroke="#adb4be" stroke-width="1.2"/></svg>
<div class="box" style="left:1276px;top:312px;width:133.5px;height:35px;border:1px solid #ced3d9;border-right:none;border-radius:4px 0 0 4px;background:#fff;"></div>
<div class="box" style="left:1408.5px;top:312px;width:37.5px;height:35px;border:1px solid #b5bbc2;border-left:1.5px solid #a9afb7;border-radius:0 4px 4px 0;background:#fff;"></div>
<div class="t" id="t509b6c18" style="left:1287.5px;top:322.30px;font-size:15px;line-height:15px;color:#495057;font-weight:normal;letter-spacing:-0.150px;">08:00</div>
<svg class="ic" style="left:1418.25px;top:320.0px;" width="16" height="16" viewBox="0 0 16 16"><circle cx="8" cy="8" r="6.8" fill="none" stroke="#adb4be" stroke-width="1.2"/><path d="M7.6,3.8 V8.3 L10.6,10.8" fill="none" stroke="#adb4be" stroke-width="1.2"/></svg>
<div class="box" style="left:1276px;top:352px;width:133.5px;height:35px;border:1px solid #ced3d9;border-right:none;border-radius:4px 0 0 4px;background:#fff;"></div>
<div class="box" style="left:1408.5px;top:352px;width:37.5px;height:35px;border:1px solid #b5bbc2;border-left:1.5px solid #a9afb7;border-radius:0 4px 4px 0;background:#fff;"></div>
<div class="t" id="t3beb9fcd" style="left:1287.5px;top:362.30px;font-size:15px;line-height:15px;color:#495057;font-weight:normal;letter-spacing:-0.150px;">17:00</div>
<svg class="ic" style="left:1418.25px;top:360.0px;" width="16" height="16" viewBox="0 0 16 16"><circle cx="8" cy="8" r="6.8" fill="none" stroke="#adb4be" stroke-width="1.2"/><path d="M7.6,3.8 V8.3 L10.6,10.8" fill="none" stroke="#adb4be" stroke-width="1.2"/></svg>
<div class="box" style="left:1276px;top:392px;width:133.5px;height:35px;border:1px solid #ced3d9;border-right:none;border-radius:4px 0 0 4px;background:#fff;"></div>
<div class="box" style="left:1408.5px;top:392px;width:37.5px;height:35px;border:1px solid #b5bbc2;border-left:1.5px solid #a9afb7;border-radius:0 4px 4px 0;background:#fff;"></div>
<div class="t" id="t1cbc41f2" style="left:1287.5px;top:402.30px;font-size:15px;line-height:15px;color:#495057;font-weight:normal;letter-spacing:-0.150px;">01:00</div>
<svg class="ic" style="left:1418.25px;top:400.0px;" width="16" height="16" viewBox="0 0 16 16"><circle cx="8" cy="8" r="6.8" fill="none" stroke="#adb4be" stroke-width="1.2"/><path d="M7.6,3.8 V8.3 L10.6,10.8" fill="none" stroke="#adb4be" stroke-width="1.2"/></svg>
<div class="box" style="left:1456px;top:312px;width:142.5px;height:35px;border:1px solid #ced3d9;border-right:none;border-radius:4px 0 0 4px;background:#fff;"></div>
<div class="box" style="left:1597.5px;top:312px;width:36.5px;height:35px;border:1px solid #b5bbc2;border-left:1.5px solid #a9afb7;border-radius:0 4px 4px 0;background:#fff;"></div>
<div class="t" id="t08eb7d9c" style="left:1467.5px;top:322.30px;font-size:15px;line-height:15px;color:#495057;font-weight:normal;letter-spacing:-0.150px;">08:00</div>
<svg class="ic" style="left:1606.75px;top:320.0px;" width="16" height="16" viewBox="0 0 16 16"><circle cx="8" cy="8" r="6.8" fill="none" stroke="#adb4be" stroke-width="1.2"/><path d="M7.6,3.8 V8.3 L10.6,10.8" fill="none" stroke="#adb4be" stroke-width="1.2"/></svg>
<div class="box" style="left:1456px;top:352px;width:142.5px;height:35px;border:1px solid #ced3d9;border-right:none;border-radius:4px 0 0 4px;background:#fff;"></div>
<div class="box" style="left:1597.5px;top:352px;width:36.5px;height:35px;border:1px solid #b5bbc2;border-left:1.5px solid #a9afb7;border-radius:0 4px 4px 0;background:#fff;"></div>
<div class="t" id="t6e8367b3" style="left:1467.5px;top:362.30px;font-size:15px;line-height:15px;color:#495057;font-weight:normal;letter-spacing:-0.150px;">17:00</div>
<svg class="ic" style="left:1606.75px;top:360.0px;" width="16" height="16" viewBox="0 0 16 16"><circle cx="8" cy="8" r="6.8" fill="none" stroke="#adb4be" stroke-width="1.2"/><path d="M7.6,3.8 V8.3 L10.6,10.8" fill="none" stroke="#adb4be" stroke-width="1.2"/></svg>
<div class="box" style="left:1456px;top:392px;width:142.5px;height:35px;border:1px solid #ced3d9;border-right:none;border-radius:4px 0 0 4px;background:#fff;"></div>
<div class="box" style="left:1597.5px;top:392px;width:36.5px;height:35px;border:1px solid #b5bbc2;border-left:1.5px solid #a9afb7;border-radius:0 4px 4px 0;background:#fff;"></div>
<div class="t" id="te618354f" style="left:1467.5px;top:402.30px;font-size:15px;line-height:15px;color:#495057;font-weight:normal;letter-spacing:-0.150px;">01:00</div>
<svg class="ic" style="left:1606.75px;top:400.0px;" width="16" height="16" viewBox="0 0 16 16"><circle cx="8" cy="8" r="6.8" fill="none" stroke="#adb4be" stroke-width="1.2"/><path d="M7.6,3.8 V8.3 L10.6,10.8" fill="none" stroke="#adb4be" stroke-width="1.2"/></svg>
<div class="box" style="left:1644.5px;top:312px;width:139.0px;height:35px;border:1px solid #ced3d9;border-right:none;border-radius:4px 0 0 4px;background:#fff;"></div>
<div class="box" style="left:1782.5px;top:312px;width:36.0px;height:35px;border:1px solid #b5bbc2;border-left:1.5px solid #a9afb7;border-radius:0 4px 4px 0;background:#fff;"></div>
<div class="t" id="t0a3af752" style="left:1656.0px;top:322.30px;font-size:15px;line-height:15px;color:#495057;font-weight:normal;letter-spacing:-0.150px;">00:00</div>
<svg class="ic" style="left:1791.5px;top:320.0px;" width="16" height="16" viewBox="0 0 16 16"><circle cx="8" cy="8" r="6.8" fill="none" stroke="#adb4be" stroke-width="1.2"/><path d="M7.6,3.8 V8.3 L10.6,10.8" fill="none" stroke="#adb4be" stroke-width="1.2"/></svg>
<div class="box" style="left:1644.5px;top:352px;width:139.0px;height:35px;border:1px solid #ced3d9;border-right:none;border-radius:4px 0 0 4px;background:#fff;"></div>
<div class="box" style="left:1782.5px;top:352px;width:36.0px;height:35px;border:1px solid #b5bbc2;border-left:1.5px solid #a9afb7;border-radius:0 4px 4px 0;background:#fff;"></div>
<div class="t" id="t667722ef" style="left:1656.0px;top:362.30px;font-size:15px;line-height:15px;color:#495057;font-weight:normal;letter-spacing:-0.150px;">00:00</div>
<svg class="ic" style="left:1791.5px;top:360.0px;" width="16" height="16" viewBox="0 0 16 16"><circle cx="8" cy="8" r="6.8" fill="none" stroke="#adb4be" stroke-width="1.2"/><path d="M7.6,3.8 V8.3 L10.6,10.8" fill="none" stroke="#adb4be" stroke-width="1.2"/></svg>
<div class="box" style="left:1644.5px;top:392px;width:139.0px;height:35px;border:1px solid #ced3d9;border-right:none;border-radius:4px 0 0 4px;background:#fff;"></div>
<div class="box" style="left:1782.5px;top:392px;width:36.0px;height:35px;border:1px solid #b5bbc2;border-left:1.5px solid #a9afb7;border-radius:0 4px 4px 0;background:#fff;"></div>
<div class="t" id="t7770ff05" style="left:1656.0px;top:402.30px;font-size:15px;line-height:15px;color:#495057;font-weight:normal;letter-spacing:-0.150px;">00:00</div>
<svg class="ic" style="left:1791.5px;top:400.0px;" width="16" height="16" viewBox="0 0 16 16"><circle cx="8" cy="8" r="6.8" fill="none" stroke="#adb4be" stroke-width="1.2"/><path d="M7.6,3.8 V8.3 L10.6,10.8" fill="none" stroke="#adb4be" stroke-width="1.2"/></svg>
<div class="box" style="left:1829px;top:312px;width:146px;height:35px;border:1px solid #ced3d9;border-right:none;border-radius:4px 0 0 4px;background:#fff;"></div>
<div class="box" style="left:1974px;top:312px;width:36.5px;height:35px;border:1px solid #b5bbc2;border-left:1.5px solid #a9afb7;border-radius:0 4px 4px 0;background:#fff;"></div>
<div class="t" id="t70de6e3a" style="left:1840.5px;top:322.30px;font-size:15px;line-height:15px;color:#495057;font-weight:normal;letter-spacing:-0.150px;">00:00</div>
<svg class="ic" style="left:1983.25px;top:320.0px;" width="16" height="16" viewBox="0 0 16 16"><circle cx="8" cy="8" r="6.8" fill="none" stroke="#adb4be" stroke-width="1.2"/><path d="M7.6,3.8 V8.3 L10.6,10.8" fill="none" stroke="#adb4be" stroke-width="1.2"/></svg>
<div class="box" style="left:1829px;top:352px;width:146px;height:35px;border:1px solid #ced3d9;border-right:none;border-radius:4px 0 0 4px;background:#fff;"></div>
<div class="box" style="left:1974px;top:352px;width:36.5px;height:35px;border:1px solid #b5bbc2;border-left:1.5px solid #a9afb7;border-radius:0 4px 4px 0;background:#fff;"></div>
<div class="t" id="t4d8b91d0" style="left:1840.5px;top:362.30px;font-size:15px;line-height:15px;color:#495057;font-weight:normal;letter-spacing:-0.150px;">00:00</div>
<svg class="ic" style="left:1983.25px;top:360.0px;" width="16" height="16" viewBox="0 0 16 16"><circle cx="8" cy="8" r="6.8" fill="none" stroke="#adb4be" stroke-width="1.2"/><path d="M7.6,3.8 V8.3 L10.6,10.8" fill="none" stroke="#adb4be" stroke-width="1.2"/></svg>
<div class="box" style="left:1829px;top:392px;width:146px;height:35px;border:1px solid #ced3d9;border-right:none;border-radius:4px 0 0 4px;background:#fff;"></div>
<div class="box" style="left:1974px;top:392px;width:36.5px;height:35px;border:1px solid #b5bbc2;border-left:1.5px solid #a9afb7;border-radius:0 4px 4px 0;background:#fff;"></div>
<div class="t" id="tdaf18c82" style="left:1840.5px;top:402.30px;font-size:15px;line-height:15px;color:#495057;font-weight:normal;letter-spacing:-0.150px;">00:00</div>
<svg class="ic" style="left:1983.25px;top:400.0px;" width="16" height="16" viewBox="0 0 16 16"><circle cx="8" cy="8" r="6.8" fill="none" stroke="#adb4be" stroke-width="1.2"/><path d="M7.6,3.8 V8.3 L10.6,10.8" fill="none" stroke="#adb4be" stroke-width="1.2"/></svg>
<svg class="ic" style="left:2015px;top:305px;" width="40" height="40" viewBox="0 0 40 40"><g fill="#c9675a"><rect x="12.2" y="10.4" width="14.9" height="3.2" rx="1"/><rect x="17.6" y="9.3" width="4.4" height="2" rx="0.8"/></g>
<path d="M14.3,13.4 V23.8 Q14.3,26.6 17,26.6 H22.5 Q25.3,26.6 25.3,23.8 V13.4" fill="none" stroke="#c9675a" stroke-width="1.3"/>
<g stroke="#c9675a" stroke-width="1.2"><line x1="17.3" y1="15.3" x2="17.3" y2="23.5"/><line x1="19.8" y1="15.3" x2="19.8" y2="23.5"/><line x1="22.4" y1="15.3" x2="22.4" y2="23.5"/></g></svg>
<div class="box" style="left:330px;top:438px;width:1723px;height:43px;border:1.5px solid #2c7c7f;border-radius:22px;"></div>
<div class="t" id="t88cbfb43" style="left:1124px;top:449.76px;font-size:18px;line-height:18px;color:#2c7c7f;font-weight:normal;letter-spacing:0.000px;">+</div>
<div class="t" id="tbe2d54a9" style="left:1143.5px;top:449.76px;font-size:18px;line-height:18px;color:#2a7a80;font-weight:normal;letter-spacing:-0.132px;">Ajouter un item</div>
<div class="box" style="left:330px;top:545px;width:1723px;height:1px;background:#e8e8e8;"></div>
<div class="box" style="left:2017px;top:584px;width:55px;height:54px;background:#fff;border-radius:6px 0 0 6px;box-shadow:-2px 4px 16px rgba(0,0,0,0.10);"></div>
<svg class="ic" style="left:2028px;top:594px;" width="32" height="32" viewBox="0 0 32 32"><path d="M19.8,24.3 C18.5,25 17.2,25.4 15.8,25.4 C10.3,25.4 6.4,21.3 6.4,15.6 C6.4,9.8 10.6,6 15.9,6 C21.1,6 24.8,9.4 24.8,14.3 C24.8,17.8 23.4,19.8 21.3,19.8 C19.9,19.8 19.2,18.9 19.2,17.4 V11" fill="none" stroke="#2c3f88" stroke-width="1.3"/><ellipse cx="15.4" cy="15.3" rx="3.7" ry="4.5" fill="none" stroke="#2c3f88" stroke-width="1.3"/></svg>
</body></html>
